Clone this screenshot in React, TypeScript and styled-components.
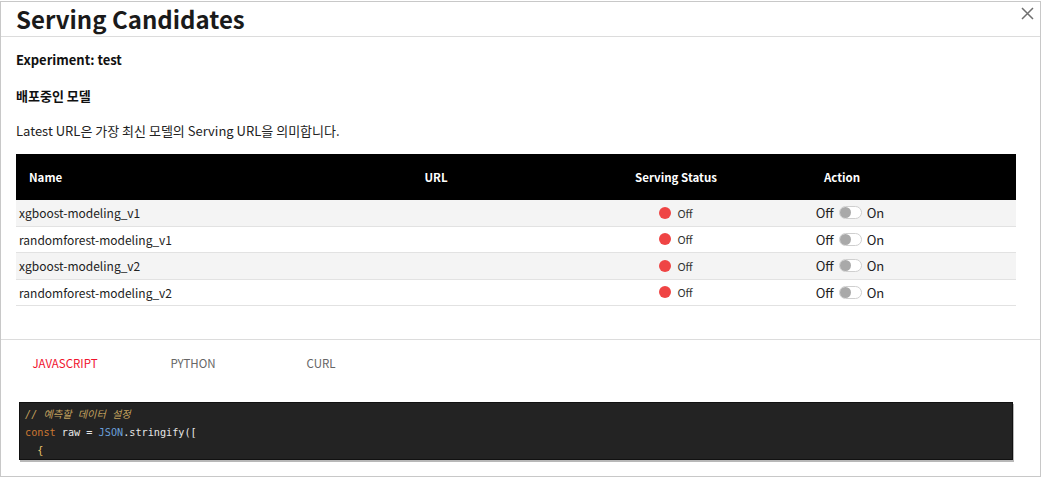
import React from "react";
import styled, { createGlobalStyle } from "styled-components";

const GlobalStyle = createGlobalStyle`
  html, body {
    margin: 0;
    padding: 0;
    background: #ffffff;
  }
  body {
    font-family: "Noto Sans CJK KR", "Noto Sans", sans-serif;
    color: #222;
  }
`;

const models = [
  "xgboost-modeling_v1",
  "randomforest-modeling_v1",
  "xgboost-modeling_v2",
  "randomforest-modeling_v2",
];

const Modal = styled.div`
  width: 1039px;
  height: 474px;
  margin-top: 1px;
  border: 1px solid #c8c8c8;
  background: #fff;
  display: flex;
  flex-direction: column;
  overflow: hidden;
  position: relative;
`;

const Header = styled.div`
  height: 34px;
  border-bottom: 1px solid #dcdcdc;
  display: flex;
  align-items: center;
  padding: 0 15px;
`;

const Title = styled.h1`
  margin: 0;
  font-size: 24px;
  font-weight: 700;
  color: #1a1a1a;
  line-height: 34px;
`;

const CloseButton = styled.button`
  position: absolute;
  top: 3px;
  right: 5px;
  width: 16px;
  height: 16px;
  padding: 0;
  border: 0;
  background: transparent;
  display: flex;
  align-items: center;
  justify-content: center;
`;

const Body = styled.div`
  padding: 13px 24px 0 15px;
`;

const Label = styled.div<{ $gap?: number }>`
  font-size: 13px;
  font-weight: 700;
  line-height: 20px;
  color: #111;
  margin-bottom: ${(p) => p.$gap ?? 0}px;
`;

const Paragraph = styled.p`
  margin: 0 0 13px;
  font-size: 13px;
  line-height: 20px;
  color: #222;
`;

const Table = styled.div`
  width: 1000px;
  display: flex;
  flex-direction: column;
`;

const cols = "300px 240px 240px 92px 1fr";

const HeadRow = styled.div`
  display: grid;
  grid-template-columns: ${cols};
  height: 46px;
  align-items: center;
  background: #000;
  color: #fff;
  font-size: 11.5px;
  font-weight: 700;
`;

const HeadCell = styled.div<{ $align?: string }>`
  text-align: ${(p) => p.$align ?? "center"};
  padding-left: ${(p) => (p.$align === "left" ? "13px" : "0")};
`;

const Row = styled.div<{ $odd: boolean }>`
  display: grid;
  grid-template-columns: ${cols};
  height: 25.5px;
  align-items: center;
  background: ${(p) => (p.$odd ? "#f4f4f4" : "#fff")};
  border-bottom: 1px solid #e2e2e2;
  font-size: 12px;
  color: #222;
`;

const NameCell = styled.div`
  padding-left: 3px;
`;

const StatusCell = styled.div`
  display: flex;
  align-items: center;
  justify-content: center;
  gap: 6px;
  font-size: 11px;
  color: #333;
`;

const Dot = styled.span`
  width: 12px;
  height: 12px;
  border-radius: 50%;
  background: #ef4444;
`;

const ActionCell = styled.div`
  display: flex;
  align-items: center;
  justify-content: center;
  gap: 5px;
  padding-left: 16px;
  font-size: 13px;
  color: #222;
  white-space: nowrap;
`;

const Track = styled.span`
  width: 21px;
  height: 11px;
  border: 1px solid #cfcfcf;
  border-radius: 7px;
  background: #fff;
  position: relative;
  display: inline-block;
`;

const Knob = styled.span`
  position: absolute;
  left: 0;
  top: 0;
  width: 11px;
  height: 11px;
  border-radius: 50%;
  background: #a9a9a9;
`;

const Divider = styled.div`
  height: 1px;
  background: #dcdcdc;
  margin-top: 33px;
`;

const Tabs = styled.div`
  display: flex;
  height: 46px;
  align-items: center;
`;

const Tab = styled.div<{ $active?: boolean }>`
  width: 128px;
  text-align: center;
  font-size: 11.5px;
  font-weight: 400;
  color: ${(p) => (p.$active ? "#f0142d" : "#666")};
`;

const CodeBox = styled.pre`
  margin: 16px 0 0 18px;
  width: 994px;
  height: 58px;
  overflow: hidden;
  background: #232323;
  border: 1px solid #111;
  box-shadow: 1px 2px 0 #b8b8b8;
  padding: 3px 5px;
  box-sizing: border-box;
  font-family: "DejaVu Sans Mono", "Liberation Mono", "Noto Sans CJK KR", monospace;
  font-size: 10.2px;
  line-height: 18px;
  color: #e6e6e6;
`;

const Comment = styled.span`
  color: #c2a15e;
  font-style: italic;
`;

const Keyword = styled.span`
  color: #cc7832;
`;

const Global = styled.span`
  color: #6a9fd8;
`;

const Brace = styled.span`
  color: #e8c46a;
`;

export default function App() {
  return (
    <>
      <GlobalStyle />
      <Modal>
        <Header>
          <Title>Serving Candidates</Title>
        </Header>
        <CloseButton aria-label="close">
          <svg width="13" height="13" viewBox="0 0 13 13">
            <path d="M1 1L12 12M12 1L1 12" stroke="#6f6f6f" strokeWidth="1.5" />
          </svg>
        </CloseButton>
        <Body>
          <Label $gap={16}>Experiment: test</Label>
          <Label $gap={15}>배포중인 모델</Label>
          <Paragraph>Latest URL은 가장 최신 모델의 Serving URL을 의미합니다.</Paragraph>
          <Table>
            <HeadRow>
              <HeadCell $align="left">Name</HeadCell>
              <HeadCell>URL</HeadCell>
              <HeadCell>Serving Status</HeadCell>
              <HeadCell>Action</HeadCell>
              <HeadCell />
            </HeadRow>
            {models.map((m, i) => (
              <Row key={m} $odd={i % 2 === 0}>
                <NameCell>{m}</NameCell>
                <div />
                <StatusCell>
                  <Dot />
                  Off
                </StatusCell>
                <ActionCell>
                  Off
                  <Track>
                    <Knob />
                  </Track>
                  On
                </ActionCell>
                <div />
              </Row>
            ))}
          </Table>
        </Body>
        <Divider />
        <Tabs>
          <Tab $active>JAVASCRIPT</Tab>
          <Tab>PYTHON</Tab>
          <Tab>CURL</Tab>
        </Tabs>
        <CodeBox>
          <Comment>// 예측할 데이터 설정</Comment>
          {"\n"}
          <Keyword>const</Keyword> raw = <Global>JSON</Global>.stringify([
          {"\n"}
          {"  "}
          <Brace>{"{"}</Brace>
        </CodeBox>
      </Modal>
    </>
  );
}
